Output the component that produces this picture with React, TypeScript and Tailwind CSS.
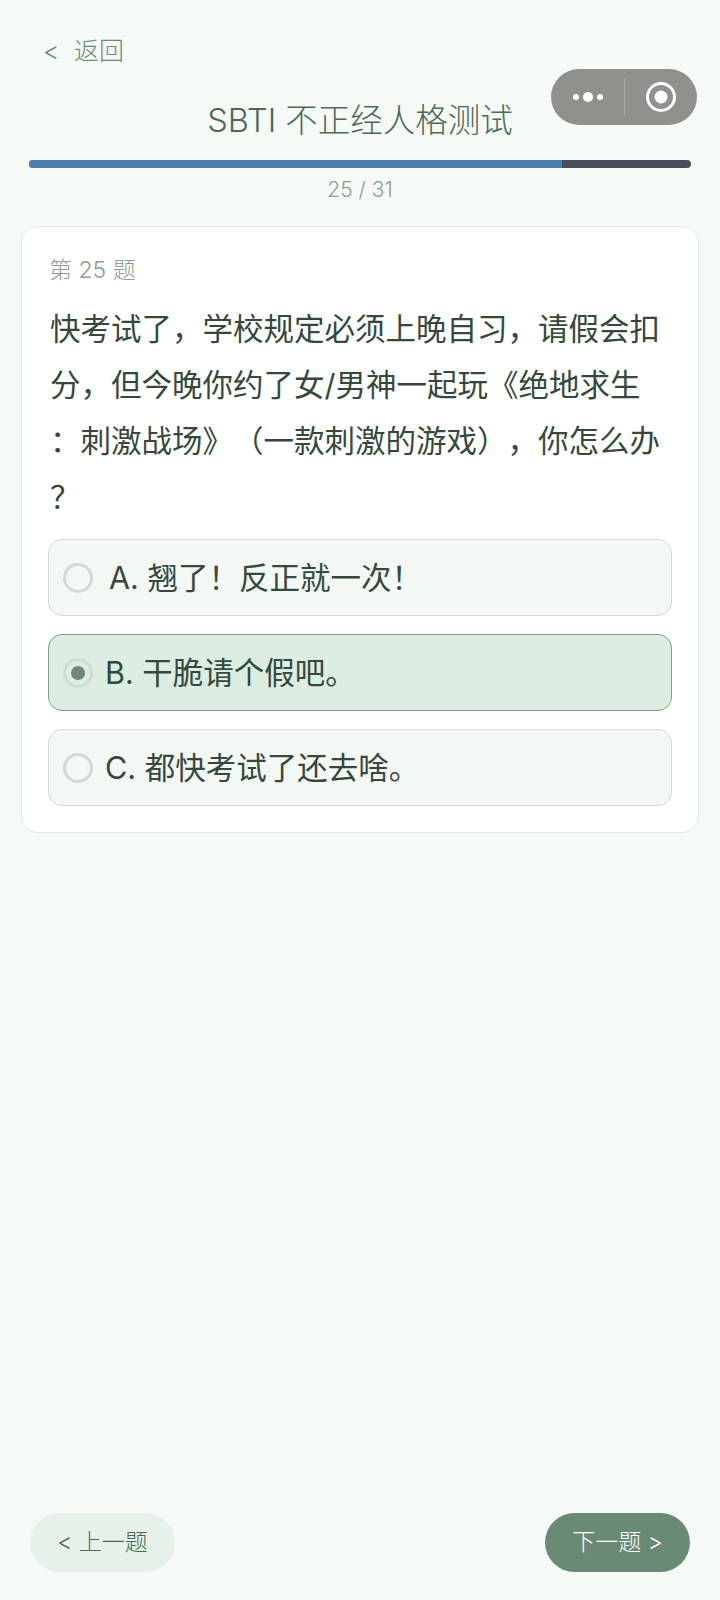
const FONT = "font-['Inter','Noto_Sans_CJK_SC',sans-serif]";

interface Option {
  label: string;
  selected?: boolean;
  pad: string;
}

const OPTIONS: Option[] = [
  { label: "A. 翘了！反正就一次！", pad: "ml-[16px]" },
  { label: "B. 干脆请个假吧。", selected: true, pad: "ml-[12px]" },
  { label: "C. 都快考试了还去啥。", pad: "ml-[12px]" },
];

const Capsule = () => (
  <div className="absolute left-[551px] top-[69px] flex h-[56px] w-[146px] items-center rounded-full bg-[#8f918d]">
    <div className="flex w-[73px] justify-center">
      <svg width="34" height="14" viewBox="0 0 34 14" fill="#fff">
        <circle cx="5" cy="7" r="3" />
        <circle cx="17" cy="7" r="5" />
        <circle cx="29" cy="7" r="3" />
      </svg>
    </div>
    <div className="h-[37px] w-px bg-[#a8aaa6]" />
    <div className="flex flex-1 justify-center">
      <svg width="32" height="32" viewBox="0 0 32 32">
        <circle cx="16" cy="16" r="13.5" fill="none" stroke="#fff" strokeWidth="3" />
        <circle cx="16" cy="16" r="6.5" fill="#fff" />
      </svg>
    </div>
  </div>
);

export default function App() {
  return (
    <div className={`${FONT} relative flex h-[1600px] w-[720px] flex-col overflow-hidden bg-[#f5faf7] [text-spacing-trim:space-all]`}>
      <Capsule />

      <div className="flex h-[36px] mt-[33px] items-center pl-[43px] text-[25px] font-light leading-none text-[#6b8a75]">
        <span className="w-[31px]">&lt;</span>
        <span>返回</span>
      </div>

      <h1 className="mt-[30px] text-center text-[32.5px] font-light leading-[44px] text-[#4a6a55]">
        SBTI 不正经人格测试
      </h1>

      <div className="mx-[29px] mt-[17px] h-[8px] overflow-hidden rounded-full bg-[#4a4e5a]">
        <div className="h-full w-[533px] bg-[#4a7fb0]" />
      </div>

      <div className="mt-[7px] text-center text-[21px] font-light leading-[30px] text-[#8a9e92]">
        25 / 31
      </div>

      <div className="mx-[21px] mt-[21px] h-[607px] rounded-[16px] border border-[#e2e9e5] bg-white px-[26px] pt-[27px]">
        <div className="pl-[1px] text-[23px] font-light leading-[32px] text-[#8a9e92]">第 25 题</div>
        <p className="mt-[15px] pl-[2px] text-[30.5px] font-normal leading-[56px] text-[#34493c]">
          快考试了，学校规定必须上晚自习，请假会扣
          <br />
          分，但今晚你约了女/男神一起玩《绝地求生
          <br />
          ：刺激战场》（一款刺激的游戏），你怎么办
          <br />？
        </p>
        <div className="mt-[14px] flex flex-col gap-[18px]">
          {OPTIONS.map((opt) => (
            <div
              key={opt.label}
              className={
                opt.selected
                  ? "flex h-[77px] items-center rounded-[14px] border border-[#7d9a87] bg-[#dcede1] pl-[14px]"
                  : "flex h-[77px] items-center rounded-[14px] border border-[#d3ddd7] bg-[#f3f8f5] pl-[14px]"
              }
            >
              <div className="flex h-[30px] w-[30px] shrink-0 items-center justify-center rounded-full border-[3px] border-[#cfdcd4]">
                {opt.selected && <div className="h-[14px] w-[14px] rounded-full bg-[#6b8a75]" />}
              </div>
              <span className={`${opt.pad} text-[30.5px] font-normal text-[#34493c]`}>{opt.label}</span>
            </div>
          ))}
        </div>
      </div>

      <div className="mt-auto mb-[28px] flex justify-between px-[30px]">
        <button className="h-[59px] w-[145px] rounded-full bg-[#e6f1ea] text-[23px] font-light text-[#4a6a55]">
          &lt; 上一题
        </button>
        <button className="h-[59px] w-[145px] rounded-full bg-[#6b8a75] text-[23px] font-light text-white">
          下一题 &gt;
        </button>
      </div>
    </div>
  );
}
